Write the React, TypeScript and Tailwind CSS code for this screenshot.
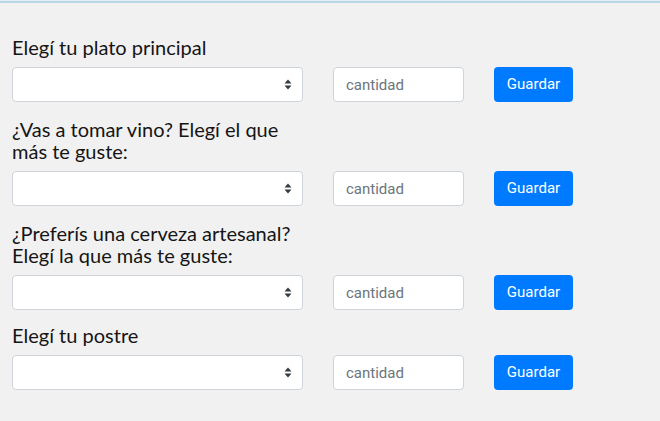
import React from 'react';

const groups = [
  'Elegí tu plato principal',
  '¿Vas a tomar vino? Elegí el que más te guste:',
  '¿Preferís una cerveza artesanal? Elegí la que más te guste:',
  'Elegí tu postre',
];

function Arrows() {
  return (
    <svg width="8" height="11" viewBox="0 0 8 11" className="pointer-events-none absolute right-[11px] top-[12px]">
      <path d="M4 0.5 L7.5 4.5 H0.5 Z" fill="#343a40" />
      <path d="M4 10.5 L7.5 6.5 H0.5 Z" fill="#343a40" />
    </svg>
  );
}

export default function App() {
  return (
    <div className="min-h-[421px] bg-[#f1f1f1]">
      <div className="h-px bg-[#e3eef4]" />
      <div className="h-[2px] bg-[#b9d7e5]" />
      <div className="px-3 pt-[33px]" style={{ fontFamily: 'Lato, "Noto Sans", sans-serif' }}>
        {groups.map((g, i) => (
          <div key={i} className={i === 0 ? '' : i === 3 ? 'mt-[14px]' : 'mt-[16px]'}>
            <label className="block w-[296px] text-[20px] leading-[22px] text-[#151515] mb-[9px]">{g}</label>
            <div className="flex items-center">
              <div className="relative">
                <select className="block h-[35px] w-[291px] appearance-none rounded-[4px] border border-[#ced4da] bg-white px-3 outline-none" />
                <Arrows />
              </div>
              <input
                placeholder="cantidad"
                className="ml-[30px] h-[35px] w-[131px] rounded-[4px] border border-[#ced4da] bg-white px-3 text-[15px] text-[#495057] outline-none placeholder:text-[#6c757d]"
                style={{ fontFamily: 'Roboto, "Liberation Sans", sans-serif' }}
              />
              <button
                className="ml-[30px] h-[35px] w-[79px] rounded-[4px] bg-[#007bff] text-[15px] text-white"
                style={{ fontFamily: 'Roboto, "Liberation Sans", sans-serif' }}
              >
                Guardar
              </button>
            </div>
          </div>
        ))}
      </div>
    </div>
  );
}
